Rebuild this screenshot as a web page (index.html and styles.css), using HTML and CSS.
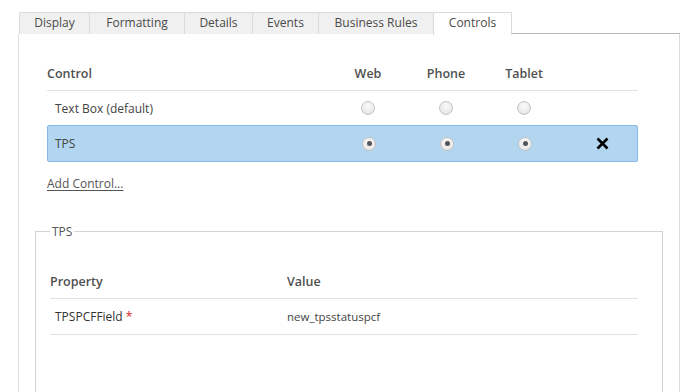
FILE: index.html
```html
<!DOCTYPE html>
<html>
<head>
<meta charset="utf-8">
<link rel="stylesheet" href="styles.css">
</head>
<body>
<div class="wrap">
  <div class="tabs">
    <div class="tab t1">Display</div>
    <div class="tab t2">Formatting</div>
    <div class="tab t3">Details</div>
    <div class="tab t4">Events</div>
    <div class="tab t5">Business Rules</div>
    <div class="tab active t6">Controls</div>
    <div class="tab-rest"></div>
  </div>
  <div class="panel">
    <div class="ctable">
      <div class="crow head">
        <div class="cname">Control</div>
        <div class="ccol">Web</div>
        <div class="ccol">Phone</div>
        <div class="ccol">Tablet</div>
        <div class="ccol"></div>
      </div>
      <div class="crow item">
        <div class="cname">Text Box (default)</div>
        <div class="ccol"><span class="radio"></span></div>
        <div class="ccol"><span class="radio"></span></div>
        <div class="ccol"><span class="radio"></span></div>
        <div class="ccol"></div>
      </div>
      <div class="crow item selected">
        <div class="cname">TPS</div>
        <div class="ccol"><span class="radio on"></span></div>
        <div class="ccol"><span class="radio on"></span></div>
        <div class="ccol"><span class="radio on"></span></div>
        <div class="ccol">
          <svg class="xicon" width="13" height="13" viewBox="0 0 13 13"><path d="M1.5 1.5 L11.5 11.5 M11.5 1.5 L1.5 11.5" stroke="#000" stroke-width="2.6" fill="none"/></svg>
        </div>
      </div>
    </div>
    <a class="addlink" href="#">Add Control...</a>
    <fieldset class="props">
      <legend>TPS</legend>
      <div class="ptable">
        <div class="prow phead">
          <div class="pname">Property</div>
          <div class="pval">Value</div>
        </div>
        <div class="prow pitem">
          <div class="pname">TPSPCFField <span class="req">*</span></div>
          <div class="pval small">new_tpsstatuspcf</div>
        </div>
      </div>
    </fieldset>
  </div>
</div>
</body>
</html>
```

FILE: styles.css
```css
html, body {
  margin: 0;
  padding: 0;
  background: #fff;
}
body {
  font-family: "Open Sans", "Noto Sans", sans-serif;
  font-size: 12px;
  color: #444;
  overflow: hidden;
  height: 392px;
}
.wrap {
  padding: 12px 0 0 18px;
  width: 662px;
}
.tabs {
  display: flex;
  height: 22px;
  padding-left: 1px;
}
.tab {
  box-sizing: border-box;
  height: 22px;
  line-height: 20px;
  text-align: center;
  background: #f0f0f0;
  border-top: 1px solid #dadada;
  border-left: 1px solid #dadada;
  color: #4a4a4a;
  font-size: 12px;
}
.t1 { width: 70px; }
.t2 { width: 95px; }
.t3 { width: 68px; }
.t4 { width: 66px; }
.t5 { width: 115px; }
.t6 { width: 79px; }
.tab.active {
  background: #fff;
  border-right: 1px solid #dadada;
  height: 23px;
  position: relative;
  z-index: 1;
}
.tab-rest {
  flex: 1;
  border-bottom: 1px solid #b8b8b8;
}
.panel {
  box-sizing: border-box;
  border-left: 1px solid #e0e0e0;
  border-right: 1px solid #dcdcdc;
  padding: 22px 17px 0 28px;
  height: 358px;
  overflow: hidden;
}
.ctable {
  width: 591px;
}
.crow {
  display: grid;
  grid-template-columns: 282px 78px 78px 78px 75px;
  align-items: center;
}
.head {
  height: 34px;
  border-bottom: 1px solid #e2e2e2;
  font-weight: 600;
  color: #505050;
  font-size: 12.5px;
}
.item {
  height: 34px;
}
.item .cname {
  padding-left: 8px;
}
.selected {
  box-sizing: border-box;
  height: 37px;
  background: #b3d6f0;
  border: 1px solid #86b6ea;
  border-radius: 2px;
}
.selected .cname {
  padding-left: 7px;
}
.ccol {
  display: flex;
  justify-content: center;
  align-items: center;
}
.radio {
  box-sizing: border-box;
  width: 14px;
  height: 14px;
  border-radius: 50%;
  border: 1px solid #c4c4c4;
  background: radial-gradient(circle at 50% 35%, #fafafa 0%, #ebebeb 60%, #dcdcdc 100%);
  display: flex;
  align-items: center;
  justify-content: center;
}
.radio.on::after {
  content: "";
  width: 5px;
  height: 5px;
  border-radius: 50%;
  background: #555;
}
.xicon {
  display: block;
  margin-left: 1px;
}
.addlink {
  display: inline-block;
  margin-top: 13px;
  color: #555;
  text-decoration: underline;
  text-underline-offset: 2px;
}
.props {
  margin: 31px 0 0 -12px;
  padding: 25px 24px 0 14px;
  border: 1px solid #d4d4d4;
  border-bottom: none;
  height: 200px;
}
.props legend {
  padding: 0 2px;
  margin-left: 0;
  color: #555;
  font-size: 12px;
}
.ptable {
  width: 588px;
}
.prow {
  display: grid;
  grid-template-columns: 237px 1fr;
  align-items: center;
}
.phead {
  height: 33px;
  border-bottom: 1px solid #e2e2e2;
  font-weight: 600;
  color: #505050;
  font-size: 12.5px;
}
.pitem {
  height: 35px;
  border-bottom: 1px solid #e2e2e2;
}
.pitem .pname {
  padding-left: 5px;
  color: #333;
}
.small {
  font-size: 11.5px;
}
.req {
  color: #e02020;
}
```
